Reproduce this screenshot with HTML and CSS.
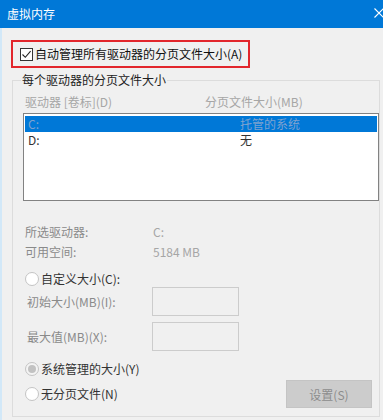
FILE: index.html
```html
<!DOCTYPE html>
<html lang="zh-CN">
<head>
<meta charset="utf-8">
<title>虚拟内存</title>
<link rel="stylesheet" href="styles.css">
</head>
<body>
<div class="window">
  <div class="titlebar">
    <span class="title">虚拟内存</span>
    <svg class="close" width="10" height="10" viewBox="0 0 10 10"><path d="M0.5 0.5 L9.5 9.5 M9.5 0.5 L0.5 9.5" stroke="#fff" stroke-width="1.1" fill="none"/></svg>
  </div>
  <div class="client">
    <div class="autobox">
      <span class="checkbox"><svg width="11" height="11" viewBox="0 0 11 11"><path d="M1.5 5.5 L4.3 8.3 L9.6 2.2" stroke="#222" stroke-width="1.1" fill="none"/></svg></span>
      <span class="autolabel">自动管理所有驱动器的分页文件大小(A)</span>
    </div>
    <fieldset class="group">
      <legend class="legend">每个驱动器的分页文件大小</legend>
      <div class="inner">
        <div class="colhead">
          <span class="col1">驱动器 [卷标](D)</span>
          <span>分页文件大小(MB)</span>
        </div>
        <div class="listbox">
          <div class="row selected"><span class="lcol1">C:</span><span>托管的系统</span></div>
          <div class="row"><span class="lcol1">D:</span><span>无</span></div>
        </div>
        <div class="info first"><span class="infolabel">所选驱动器:</span><span class="infovalue">C:</span></div>
        <div class="info"><span class="infolabel">可用空间:</span><span class="infovalue">5184 MB</span></div>
        <div class="radiorow custom"><span class="radio"></span><span class="radiotext">自定义大小(C):</span></div>
        <div class="field first"><span class="fieldlabel">初始大小(MB)(I):</span><span class="input"></span></div>
        <div class="field"><span class="fieldlabel">最大值(MB)(X):</span><span class="input"></span></div>
        <div class="radiorow system"><span class="radio checked"></span><span class="radiotext">系统管理的大小(Y)</span></div>
        <div class="lastrow">
          <div class="radiorow"><span class="radio"></span><span class="radiotext">无分页文件(N)</span></div>
          <span class="button">设置(S)</span>
        </div>
      </div>
    </fieldset>
  </div>
</div>
</body>
</html>
```

FILE: styles.css
```css
* { box-sizing: border-box; }
html, body { margin: 0; padding: 0; }
body {
  font-family: "Noto Sans CJK SC", "Microsoft YaHei", sans-serif;
  font-size: 12px;
  background: #f0f0f0;
}
.window {
  width: 383px;
  height: 420px;
  overflow: hidden;
  background: #f0f0f0;
}
.titlebar {
  height: 28px;
  background: #0078d7;
  display: flex;
  align-items: center;
  padding-left: 7px;
  color: #fff;
  line-height: 16px;
}
.title { font-size: 12px; }
.close { margin-left: auto; margin-right: -1px; margin-top: -2px; }
.client {
  height: 392px;
  border-left: 2px solid #d2e8f8;
  padding: 12px 0 0 9px;
}
.autobox {
  display: flex;
  align-items: center;
  width: 239px;
  height: 28px;
  border: 2px solid #e2262c;
  padding-left: 7px;
}
.checkbox {
  width: 13px;
  height: 13px;
  border: 1px solid #333;
  background: #fff;
  display: flex;
  align-items: center;
  justify-content: center;
}
.autolabel {
  margin-left: 2px;
  color: #111;
  line-height: 16px;
}
.group {
  margin: 4px 0 0 1px;
  width: 368px;
  border: 1px solid #dcdcdc;
  padding: 0;
  min-width: 0;
}
.legend {
  margin-left: 8px;
  padding: 0 1px;
  line-height: 16px;
  color: #222;
}
.inner {
  padding: 0 0 8px 10px;
}
.colhead {
  display: flex;
  margin-top: 6px;
  padding-left: 2px;
  line-height: 16px;
  color: #a6a6a6;
}
.col1 { width: 180px; }
.listbox {
  margin-top: 3px;
  width: 356px;
  height: 88px;
  border: 1px solid #828282;
  background: #fff;
  padding: 2px 1px 1px 1px;
}
.row {
  display: flex;
  height: 16px;
  line-height: 16px;
  padding-left: 3px;
  color: #333;
}
.row.selected {
  background: #0078d7;
  color: #7fa2cf;
}
.lcol1 { width: 212px; }
.info {
  display: flex;
  line-height: 20px;
  padding-left: 2px;
}
.info.first { margin-top: 21px; }
.infolabel { width: 128px; color: #8a8a8a; }
.infovalue { color: #a6a6a6; }
.radiorow {
  display: flex;
  align-items: center;
  height: 16px;
  padding-left: 2px;
}
.radiorow.custom { margin-top: 9px; }
.radiorow.system { margin-top: 10px; }
.radio {
  width: 14px;
  height: 14px;
  border-radius: 50%;
  border: 1px solid #c4c4c4;
  background: #fff;
  display: flex;
  align-items: center;
  justify-content: center;
}
.radio.checked { background: #f4f4f4; }
.radio.checked::after {
  content: "";
  width: 8px;
  height: 8px;
  border-radius: 50%;
  background: #c2c2c2;
}
.radiotext {
  margin-left: 2px;
  color: #333;
  line-height: 16px;
}
.field {
  display: flex;
  align-items: center;
  margin-top: 6px;
  padding-left: 4px;
}
.field.first { margin-top: 0; }
.fieldlabel { width: 125px; color: #8a8a8a; line-height: 16px; }
.input {
  width: 87px;
  height: 29px;
  border: 1px solid #cccccc;
  background: #f0f0f0;
}
.lastrow {
  display: flex;
  align-items: center;
  justify-content: space-between;
  height: 28px;
  margin-top: 3px;
  padding-right: 7px;
}
.button {
  width: 86px;
  height: 28px;
  background: #cccccc;
  border: 1px solid #c4c4c4;
  color: #8c8c8c;
  display: flex;
  align-items: center;
  justify-content: center;
}
```
